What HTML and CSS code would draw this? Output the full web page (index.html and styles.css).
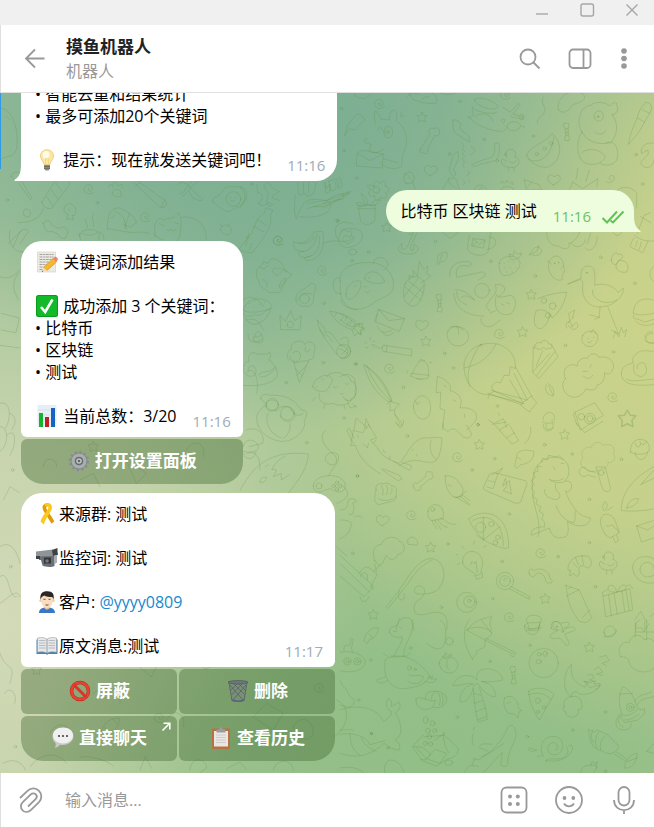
FILE: index.html
```html
<!DOCTYPE html>
<html lang="zh-CN">
<head>
<meta charset="utf-8">
<meta name="viewport" content="width=device-width, initial-scale=1">
<title>摸鱼机器人</title>
<link rel="stylesheet" href="styles.css">
</head>
<body>
<div class="app">
  <div class="titlebar">
    <button class="win-btn" aria-label="最小化"><svg width="16" height="16" viewBox="0 0 16 16"><path d="M2 12h12"/></svg></button>
    <button class="win-btn" aria-label="最大化"><svg width="16" height="16" viewBox="0 0 16 16"><rect x="2" y="2" width="12.500" height="12" rx="2"/></svg></button>
    <button class="win-btn" aria-label="关闭"><svg width="16" height="16" viewBox="0 0 16 16"><path d="M2.500 2.500l11 11M13.500 2.500l-11 11"/></svg></button>
  </div>

  <header class="header">
    <button class="icon-btn back" aria-label="返回"><svg width="24" height="24" viewBox="0 0 24 24"><path d="M22.500 11.500H4M13 2.500l-9 9 9 9"/></svg></button>
    <div class="peer">
      <h1 class="peer-name">摸鱼机器人</h1>
      <p class="peer-status">机器人</p>
    </div>
    <button class="icon-btn" aria-label="搜索"><svg width="24" height="24" viewBox="0 0 24 24"><circle cx="10" cy="10" r="7.500"/><path d="M15.500 15.500l6 6"/></svg></button>
    <button class="icon-btn" aria-label="侧栏"><svg width="24" height="24" viewBox="0 0 24 24"><rect x="1.500" y="2.500" width="21" height="18.500" rx="3.500"/><path d="M15.500 2.500V21"/></svg></button>
    <button class="icon-btn more" aria-label="更多"><svg width="24" height="24" viewBox="0 0 24 24"><g class="solid"><circle cx="12" cy="4" r="2.800"/><circle cx="12" cy="11.500" r="2.800"/><circle cx="12" cy="19" r="2.800"/></g></svg></button>
  </header>

  <main class="chat">
    <svg class="wallpaper" viewBox="0 279 1962 2040" preserveAspectRatio="xMidYMid slice" aria-hidden="true">
      <defs>
        <path id="star" d="M0-15l5 9 10 1-7 8 2 11-10-5-10 5 1-11-7-8 11-1z"/>
        <path id="heart" d="M-2 17C-12 12-22 4-18-7c4-9 14-9 19 0C8-16 19-12 19-3 18 8 6 12-2 17z"/>
        <path id="spiral" d="M1 1c-4-3-7 2-4 6 4 5 13 1 12-7C8-11-8-13-14-3c-6 11 2 21 14 20 6 0 10-2 13-5"/>
        <circle id="dot" r="4"/>
        <path id="candy" d="M-7-26l12-1 2 10-3 6 1 22 4 7-2 8-14-1 2-9 3-5-3-22-4-7zM-5-8l11-4M-5 3l10-4M-5 12l10-4"/>
        <path id="bone" d="M-18 8l26-22c-3-9 3-16 9-12 5-3 12 1 9 8 6 4 4 12-4 13l-4 1-26 22c2 7-3 13-9 10-5 4-12-1-10-7-7-3-5-12 2-14z"/>
        <path id="fish" d="M-28 25l4-15C-20-8 0-28 28-26c2 22-16 44-38 43l-10 11zM-17 2l10 10M10-22l12 13"/>
        <path id="chick" d="M-14-8c-10-18 10-34 24-18 5 6 3 12 0 16 18 2 18 30-4 32h-14c-22-2-26-20-18-26l12 8M-8 24v10M8 24v10M-14-20l-8 3 8 4M-6 5c8 8 18 4 20-4"/>
        <path id="cloud" d="M-60 62c-22-10-20-34-6-44-20-28 10-54 34-46 10-28 42-28 50-8 30-16 62 8 44 36 18 14 0 42-22 36 2 22-16 30-30 26-14 16-52 18-70 0z"/>
      </defs>

      <g class="doodles">
        <g transform="translate(972 0)">
          <path d="M86 275l10 14q16 12 34 2l14-14M248 290q20-18 30-6l20-14M254 278l12 20q30 14 70 12c6-14-2-28-16-32M294 300q10-16 22-8M350 280q20 8 44 0"/>
          <path d="M62 406l10-34 28-30c8-2 20 10 22 18l-30 30-14-4z"/>
          <path d="M154 372c-4-22-4-38 2-40l16 26 24 2c0-22 8-34 16-28 8 8 8 22 4 30 30 20 40 58 24 92-6 14-8 30-6 44-20 14-52 8-66-10M130 418c-10-6-14 6-6 10l18 6c-8 14-6 22 2 24 14 2 26-4 36-12M180 394c2-22 28-20 26 4-2 22-28 22-26-4zM162 390q8-18 12 0M100 460l14-10 64 12-4 42-76-6zM100 460l38 22 40-20M178 476l42 12M232 338l-2 12M238 346l-4 6"/>
          <circle cx="190" cy="396" r="5"/>
          <path d="M290 448l28-46c-8-12 2-22 12-16 8-6 20 0 16 10 4 10-8 14-14 10l-22 42c6 14-6 16-12 10-14 0-14-12-8-10z"/>
          <path d="M388 360c-4 20 0 34 10 42s24 14 38 24c4-16-6-24-20-32-10-8-10-14-4-22q-14-16-24-12zM414 430l6 8-6 8 8 8-8 8 8 8-8 8 8 8-6 8 4 8M386 468l16-14c6 20-6 40-14 54l8 16-8 6c-14-12-14-26-6-42z"/>
          <path d="M440 440c8 0 18 8 10 18-6 8-10 8-12 4M444 494c22-12 40-16 54-20 14-6 16-22 14-44l12-2c6 26 0 44-10 54-18 6-42 8-64 18z"/>
          <path d="M452 300c4-16 66 4 70 20-8 16-64 2-70-20zM444 318c-4 14 60 30 76 18M444 324l4 20c-8 10-16 12-14 6 16 20 58 44 100 44M452 350c20-16 44-10 56 14M536 322l22 14 26-26 4 6-22 26 32 8c4 8-2 10-8 6l-30-6"/>
          <path d="M548 380c0-16 34-22 42-4-4 20-36 22-42 4zM540 372l-8-10c4-12 14-4 10 4M590 358c-8-6 0-20 8-12l-4 14M546 386l-6 8M592 378l10 4"/>
          <path d="M660 290c-16 16 8 30 2 44-4 16-24 18-22 36M704 330c-10-20 14-54 46-56 16-2 34 10 32 20-6 16-30 14-40 24-8 16-26 26-38 12z"/>
          <path d="M608 466c8-30 56-34 76-66 34 26 32 86-16 102-26 2-52-16-60-36zM614 478c24 14 66 2 76-68"/>
          <circle cx="638" cy="462" r="5"/><circle cx="662" cy="446" r="5"/><circle cx="682" cy="430" r="5"/>
          <path d="M774 396c-20-28-6-78 26-80 14-14 44-10 58 2 8-12 24-14 20-2 8 10 0 28-14 28 20 24 18 60-4 84-28 6-66 4-86-32zM774 396c-14 16-16 52-8 74 10 28 50 26 62 18 10 14 48 8 52-14 6-30-10-56-34-46M810 350c0-22 28-24 28 0-2 18-26 18-28 0M774 458c24-20 60-6 70 12-4 10-14 18-16 18M846 392c-8 12-22 14-34 4"/>
          <circle cx="822" cy="350" r="3"/>
          <path d="M914 432c2-22 12-50 26-78l22 12c-14 28-32 50-48 66zM940 354c2-18 10-28 24-46 14-2 20 6 18 22l-20 36M956 330l22 10M990 430c-20-6-42 8-38 30l20-10c6 20-16 22-22 40 14 24 40 10 40-10"/>
          <path d="M150 560c-6-16 12-24 18-8 6-18 24-6 14 8 16-4 18 16 2 18 12 10-4 26-14 12-4 18-22 12-18-4-14 10-26-8-10-18-18-4-14-22 8-8z"/><circle cx="157" cy="570" r="10"/>
          <path d="M104 616h50l-2 46c-8 14-36 16-42 2zM102 626h52M126 614q-22-10-30-4 12 16 30 6M132 614c0-14-12-30-20-34 2 16 6 26 20 34zM138 616q12-20 32-16-10 18-32 16"/>
          <path d="M246 550c-20-22 12-50 24-22 6 12-8 28-24 22zM264 542l10 26M238 524q12-10 20 12M0 548l6 20c-8 14 12 14 12 0l-4-24 24-8 6 18c-8 14 10 16 10-2l-8-22M0 610c20-20 44-30 60-28l-6 16c-14 0-30 14-38 18l-16 8M50 584l14-6 16-4-14 14-12 10M354 572l20-36c6-4 16-2 22 2l10 30M374 536q0 20 24 30"/>
          <path d="M430 512l6 6-6 10M418 540l6 6-6 8M434 540l4 8M452 570c4-20 28-20 36-2M464 570q4-10 12-6M600 540l8 30h46l-10-16zM608 562l14-14M530 570c6-14 36-14 40 0M532 550c-4-6 8-10 8 0M546 548c-2-8 8-8 8 0M560 552c0-10 10-6 6 2M736 570l10-24 30 20 46-30-4 24M762 504l-6 34M786 544l10-34M860 540c-10-4-2-18 8-12 10 10-4 24-20 18M880 570c20-16 50-6 58 10v44M940 700l20-54 20-8M950 650l30 18"/>
          <path d="M0 730c30-20 70 10 90-20M40 716c-20-40 10-60 48-44M50 700c0-14 14-16 20-4 12-10 20 4 6 16"/>
          <use href="#star" x="294" y="352"/><use href="#star" x="188" y="682"/><use href="#heart" x="320" y="510"/><use href="#heart" x="690" y="538"/><use href="#spiral" x="168" y="308"/><use href="#spiral" x="546" y="280"/><use href="#candy" x="728" y="396"/><use href="#chick" transform="translate(562 480)"/>
          <use href="#dot" x="52" y="326"/><use href="#dot" x="408" y="304"/><use href="#dot" x="480" y="418"/><use href="#dot" x="628" y="408"/><use href="#dot" x="60" y="452"/><use href="#dot" x="376" y="462"/><use href="#dot" x="520" y="482"/><use href="#dot" x="936" y="464"/><use href="#dot" x="98" y="534"/><use href="#dot" x="40" y="662"/><use href="#dot" x="956" y="552"/>
        </g>

        <g transform="translate(1020 690)">
          <path d="M206 14l14-4-14 30c-4 14-14 22-22 16l2-16-12 12c0 16 18 22 36 20 14 2 28-10 24-22l-12-8-2 18c-10 4-10-4-6-16l16-34M388 14l-6 44c10 20 50 24 62 8l8-58M448 22c26-6 28 34-6 36M400 26l36 4-6 24-34-6zM400 26l18 18 18-14M396 48l14-12M310 8l20 18 26-20M620 8c0 30 20 42 36 40 14 14 40 8 30-8 18-4 30-20 34-40M694 40c10 16 36 14 42-10M752 10l-10 30M736 54c18 20 36-10 36-34M820 8q14 18 24 0M884 16c14 14 40 20 60 16M882 24c-14 18-12 30-4 30l30 14 16-34M892 32l-6 18M904 36l-6 22"/>
          <path d="M292 102c-4-30 10-34 28-36 6 22-8 30-18 30M306 74l-10 30M568 74c14-26 26-30 38-12-4 16-22 18-30 12M596 46l-4 16-24 14"/>
          <path d="M478 100c0-26 60-30 62 0 0 20-26 40-50 36-10-6-14-20-12-36zM512 86l-4-14 12 4 2-14 10 10 14-2-10 14-14 6z"/>
          <path d="M492 100h1M506 94h1M522 98h1M494 114h1M510 112h1M526 114h1M500 126h1M516 126h1" />
          <path d="M650 78c-26 0-30 34-20 50 10 22 28 26 38 20-8-10 10-24 4-34-2-22-10-36-22-36M622 92l12 10M670 108l-8 8"/>
          <circle cx="644" cy="100" r="1"/><circle cx="656" cy="98" r="1"/>
          <path d="M814 90c0-18 18-28 20-16 14-6 20 10 6 14l-10 14c-10 4-16-4-16-12zM830 100c-12 22 18 30 30 26 14-24-10-40-24-34z"/>
          <path d="M100 100c4-30 46-18 44 6-4 10-10 10-14 14M0 154c-8-40 44-58 80-56 46-6 86 32 80 74-4 26-36 30-56 44-30 28-86 34-104-8"/>
          <path d="M18 192c0-26 26-46 44-38 6 14-12 50-32 54-10 0-12-8-12-16zM74 146c0-30 50-28 60 10-12 10-58 2-60-10zM76 184q6 10 14-2M44 168h4M86 144h4M72 170h8"/>
          <path d="M196 160c10-26 46-26 56-4 4 30-10 66-30 72-26 4-40-34-26-68zM210 150l-4-14 14 4 0-18 12 16 6-44 12 24 14-10-4 24 12 6-16 14-14 6M194 170l50 42M204 152l46 36M192 200l42-54M206 222l46-56"/>
          <path d="M330 140c-6-34 24-50 60-44 6 4 4 12-4 12-34-6-40 10-36 34l28-6 40-8c10-6 20 2 18 8l-20 14M342 190c2 40 30 68 90 68M344 180c14-6 46 10 58 30M350 184c0 24 14 36 30 40M404 210c-20-14-30-16-40-8"/>
          <circle cx="426" cy="182" r="22"/>
          <path d="M470 196l10 6 32-6 8 4c10 14 8 40-8 52-30 8-48-10-46-40zM452 206c10-10 22-18 14-42 18-4 30 4 28 18l-18 20M452 206l-14 22 14 20 16-6M424 264c-6 14 10 28 24 26 20-4 20-14 34-20M484 222l8 4M500 218l8 4"/>
          <path d="M594 206c20-10 58-18 86-20-4 28-20 60-44 78-10-20-26-30-48-22M588 244c-12 30-2 54 14 52 16-6 24-24 26-42"/>
          <circle cx="638" cy="228" r="10"/><circle cx="612" cy="212" r="8"/><circle cx="624" cy="256" r="8"/>
          <path d="M684 162l40-18c-4-20 4-36 20-36 20 0 22 16 20 58 24-10 60 2 70 22l16-14c4 20-26 54-62 56-36 6-64-20-60-62 2-12-2-16-6-20l-38 14M758 180c-6 28 40 50 72 30M780 230l-2 32-30-8M778 262l-14 6M804 232l32 80-22-12M820 324l6-20 10 16 8-28 6 16 10-10-6 22"/>
          <circle cx="740" cy="128" r="2"/>
          <path d="M880 250c0-56 60-46 70-34M880 250c10 8 60 6 70-6M880 256c-2 10 6 12 10 10l24 10 36-10M886 272c14 20 50 16 60 6M940 110c-20 20-6 40 0 44M938 310c-30 0-26 36 4 30"/>
          <path d="M116 238l78 28-16 38-70-28zM116 238l30 34 48-6M108 276l-6-6 10-18M112 288c4 16 20 22 30 18l14-6M126 306c10 16 24 12 34 2"/>
          <path d="M0 250c20 6 46 20 56 34-10 12-30 8-56-16M56 284l12-4-2 12 8 6-10 4-2 12-14-14-8-6M20 260l-4 12M36 270l-6 14"/>
          <path d="M324 302c14-22 60-14 62 18-2 30-46 38-60 12-6-14-6-22-2-30zM330 292c14-8 30 0 40 8M350 288q10 14 6 24"/>
          <path d="M680 294c-10-26 18-22 16-2 10-20 22-16 16 0-8 10-20 8-26-6M690 276l-4-26 18-10-6 22M700 262l-16 16M728 316c6-14 28-14 34-10 20 6 12 40-10 44-20 0-32-14-24-34zM744 326h2M760 322h2M744 338q8 2 12-6M752 308l8-10 10 14M916 324c-6-10 10-22 22-18M914 330c10 10 20 10 30 6"/>
          <path d="M132 346l84 12-2 20-84-14c-6-8-4-16 2-18zM142 346l-4 20M128 352c-18 10-16-10-34-8M90 330l2-8M80 340l-6-4M84 352l-8 2M98 336l6-4M100 350l4 4"/>
          <path d="M212 438c10-10 12-34 32-46 20 2 22 20 22 50-14 10-42 4-54-4zM212 430l54 6M236 394l6-6 12 4M230 446c8 4 16 2 18 0M200 430l4-8M268 396l8 2"/>
          <path d="M72 404c26 18 60 40 84 108l-10 4c-44-30-64-70-74-112zM82 410c16 44 40 76 72 104M78 406c40 34 60 70 76 106M142 522l6-8 30 8-14 16v14c14 20 30 30 20 40-10 2-10-8-14-12M150 520l0 22 12-2M164 552l16 30"/>
          <path d="M220 530c4-42 50-46 52 4 0 44-46 46-52-4zM226 512l6 12 8-8M0 440c20-14 34 8 34 16 16-4 16 20 10 26 10 20-14 38-30 26l-4-8M20 508l10 26 20-6M0 330c16-16 30-10 24 16 20 20-6 48-24 36M0 346c20 0 34 20 14 36"/>
          <path d="M292 440c16 0 30 16 40 28l-2 14c20 4 30 16 34 32l-4 20c30-4 50 10 50 26 0 16-20 30-30 40M292 440l-4 48 14-2-2 50 14 4-6 60M312 466l6 4M340 510l8 4M374 552v10"/>
          <path d="M372 404c6-50 50-66 88-64 40 4 66 34 66 66v10l-16-6-2 26-16 0-10 22-14-2-14 12 8 16-16 10-2 12M372 404c-2 50 30 90 72 90M372 414c30-6 70-20 96-72M390 470c-14-30-2-80 32-128M426 350c-10-10-2-6 0-6M526 410l50 90M522 430l40 80M510 450l40 70M444 490l100 34M454 480l98 42M464 484l96 26M448 494l96 24M560 510l14-12 16 20-22 28-26-20 10-12z"/>
          <path d="M580 352l-2 74 18 20 58-66-20-38M578 426l52-56M590 436l54-70M588 410l20-48M584 350c0-14 16-14 18-10 6-14 24-8 24 2 16 0 10 20 0 12-6 6-14 0-16-2-8 8-18 8-20 2-8 2-12 0-6-4z"/>
          <path d="M676 446c-14-32 14-50 36-38-2-20 24-28 30-22 4-20 30-18 34-4 34-8 52 20 42 36-6 20-20 14-24 10 0 30-14 36-22 36-2 22-30 16-34 12-10 24-40 36-60 14-12-14-14-30-2-44zM728 424h14M750 412l4-8M730 438c10 10 22 10 28-2"/>
          <path d="M618 464c-6 26 10 32 22 34 4-20-2-28-16-38M626 466l12 28M844 430c0-20 20-30 36-30-8-20 10-30 20-36 10-4 30 0 40 0M844 430c0 30 30 40 98 34M882 404c-4 20 0 30 20 36 20-4 20-20 14-34 0-14-30-10-24 10M860 448c20 10 50 0 80 0"/>
          <path d="M706 546l58-28 26 38-68 44zM706 546l-6 6 12 36"/><circle cx="750" cy="566" r="16"/><circle cx="724" cy="560" r="10"/><circle cx="750" cy="566" r="9"/>
          <path d="M610 570c-4-16 16-28 28-20 10 10 6 24-4 22M608 576c10 6 24 4 36 0M618 582v14q8 6 20-2M456 584l34-18 10 26M446 570l10 8M474 548l4 8M42 600l6-36 34 30M74 596l4-30 12 26"/>
          <use href="#heart" x="246" y="284"/><use href="#spiral" x="480" y="308"/><use href="#spiral" x="150" y="412"/><use href="#spiral" x="820" y="498"/><use href="#star" x="574" y="194"/><use href="#star" x="548" y="306"/><use href="#star" x="258" y="334"/><use href="#star" transform="translate(862 566) scale(1.700)"/><use href="#candy" x="298" y="220"/>
          <use href="#dot" x="286" y="34"/><use href="#dot" x="86" y="66"/><use href="#dot" x="36" y="92"/><use href="#dot" x="452" y="94"/><use href="#dot" x="586" y="138"/><use href="#dot" x="782" y="82"/><use href="#dot" x="884" y="160"/><use href="#dot" x="314" y="370"/><use href="#dot" x="676" y="346"/><use href="#dot" x="820" y="366"/><use href="#dot" x="340" y="414"/><use href="#dot" x="190" y="472"/><use href="#dot" x="472" y="528"/><use href="#dot" x="46" y="402"/><use href="#dot" x="414" y="584"/>
        </g>

        <g transform="translate(1020 1260)">
          <path d="M32 76l8-44 28 6 18-24 24 40-20 6 20 20c14 30 40 40 66 50 20-10 30-60 70-76 34 0 40-4 60 0-2 30-6 62-24 72-40 6-50-20-104 10M32 76l14 0c10 30 30 60 76 86M40 70l-20-40 8-6 14 30M124 148l50 34 12-4-8-12-50-20M160 124l46 26c10-4 10-8 6-14l-24-8M274 60c-10 20 0 50 16 60M70 72l12 12 4-14M52 44l4 8M130 90l4 8M150 108l-2 10M108 60l-8 10M218 88v4M230 104v4"/>
          <path d="M308 10c-2 14 6 20 16 24 14-14 24-4 24-4l22 20c14 10 26 0 24-10l-14-24M456 6l60 66 20-10-26-44M466 12l34-6M478 30l30-18M500 54l24-16M572 22q4 30-18 48M610 14c0 14 6 20 16 18 14-2 16-12 12-22M708 8l26 30 54-34M166 4c10 20 30 14 24-4"/>
          <path d="M108 210c-4-18 12-22 22-18 8-6 20 0 22 4 16 2 20 10 16 28 4 14-6 18-12 20l-40 10c-14-4-14-20-8-44zM116 236c14 10 40 6 54-8M124 196q10 16 4 30M140 196q8 12 0 28M156 204q4 10-6 20"/>
          <path d="M316 168c20-4 42 10 54 42l-6 20-20 2c-20-12-30-34-28-64zM342 230c4 8 20-2 26-8l12-10M360 228l30 26M366 224l24 18M350 232l36 22M324 194l10 4"/>
          <path d="M470 160l86 22c6 6 6 12 2 18l-16 46c-8 6-14 4-20 2l-84-36c-10-4-8-8-6-14l16-34c8-6 14-6 22-4zM474 160l-14 44M456 164l32-20-12 16M440 200l18 6M446 182l18 4M496 176l-8 22 20-16 6 40-24-10 10-14z"/>
          <path d="M524 138l8-38c16-14 30-10 50-6 0 22-14 38-40 40l-10 10zM532 112l10 6"/>
          <path d="M594 350c16-60-34-110-12-190 6-30 34-50 64-48 30 2 44 20 40 50-2 10-6 14-12 22 14-4 24 4 20 20-6 16-14 12-18 8 10 30 24 50 36 64 14 12 26 16 40 18-4 22-24 28-50 20l-20-8c4 20 4 34-4 44-30 10-42 0-50-26l-54 22c-4-20 16-24 34-26M604 140l-12-2 2 16-14 4 6 14-12 8 8 14-8 10 10 12-6 14 14 8-4 14 14 8-4 14 12 8-4 16 8 10-2 16M604 128l4-14 14 6 4-14 18 4 14-2 12 10M672 186c-16 4-34 2-44-8 14 6 30 6 42-2M646 192c0 16 2 22 12 28 8 16-10 24-26 14-16-4-22-20-18-26M648 256c10 30 30 50 54 52 6-14 2-24 4-34M664 130h8M640 140l6 10"/>
          <use href="#cloud" transform="translate(776 102) scale(.700)"/>
          <path d="M768 142l20 66c8 10 22 8 24-2l-16-64zM766 158c-10-6-14-2-22-6-6-14-22-14-26 0s14 24 26 12c8 6 14 4 22 8"/><circle cx="784" cy="158" r="8"/>
          <path d="M872 96c-6-50 60-50 56-6-4 14-40 18-56 6zM886 98c0 28 34 28 36-2M886 70c0 14 14 14 16 2M900 64c0 12 16 12 20 0M942 140c-60 30-100 80-98 132 30 2 70 2 98-6M942 150l-40 44 40-20M860 264c6-24 24-30 36-28-4 18-20 26-36 28z"/>
          <path d="M792 272c-8-14-2-20 4-28 8 8 6 20 0 28M804 270l14-10M782 314c-8-40 34-40 44-10l12 34-28 16-14-10zM798 316c10 10 14-6 22 0 4 14 14 8 16 20M818 350l8 18 10-6-6-16M890 318l50-16M890 318l14 48 38-12M890 318l34 12 18-12"/>
          <path d="M388 296c30-30 120-30 118 86l-10 4c-60-14-90-40-110-90zM398 302c40-24 92-6 92 76M430 292v68l50-40M430 360l-20-14"/><circle cx="422" cy="322" r="15"/><circle cx="454" cy="312" r="8"/><circle cx="474" cy="352" r="7"/><circle cx="466" cy="368" r="7"/>
          <path d="M264 274c0-24 36-28 44-4 6 14 2 18 0 26l-32 6c-12-4-12-16-12-28zM276 300c0 14 12 14 14 26M284 300c4 14 14 14 18 28M292 298c10 14 14 20 30 24M300 294c20 4 24 24 48 18M0 270c20 0 24-10 24-30 14-8 24 0 26 4l-12 6c6 14 6 20-2 34l-10-2M44 290q20-6 22 4M0 300c20 0 30 4 34 10-2 30-20 40-34 46"/>
          <circle cx="278" cy="268" r="6"/>
          <path d="M104 422c-10-30 0-50 20-48 10-30 50-26 54-10 24 8 16 40-4 38-6 22-30 20-34 4-10 10-8 30-24 30l-12-14zM204 372c-6-14 6-22 16-20 10 4 16 14 12 22zM104 432l6 22M120 436l-20 18M58 460c14-24 24-20 34-14l20 16-20 40M62 470c0-10 14-18 20-6v16M0 406l102 94-30 30-72-62M0 430l88 86M100 508l-8-10M60 530c4 20 20 20 28 0"/>
          <path d="M138 562l50-66c30-50 60-84 90-80 34 6 44 54 22 84-10 20-40 24-70 22-14-12-4-26 12-24 16 6 16 24-2 40-14 4-26 30-10 44 30 10 50-16 80 0 14 14 12 30 10 48M144 566l56-70c20-30 40-60 76-76M178 512l-4 18c10 20 24 6 18-8"/>
          <path d="M368 428c-4-46 60-46 60 4-2 14-6 14-4 28l-16 8c-6-18-36-16-40-40zM392 434l4-10 8 8 4-8 4 34M404 466l6 12 18-6-2-14M400 372l4-10M372 386l-6-8M354 404h-6M360 430l-8 4M430 382l10-6"/>
          <circle cx="495" cy="483" r="26"/><circle cx="495" cy="483" r="16"/><path d="M494 483c-8-4-2-10 6-6M514 500l56 30-2 8-60-32"/>
          <path d="M568 462c-6-16 8-20 12-10 24-14 50 4 50 24 10 4 8 16-2 12-8 4-12-4-12-14-8-16-22-20-32-8-2 8-12 6-16-4zM684 450c-4-30 30-50 60-40 16 10 12 32-2 34-20-14-30-4-24 12 0 16-14 16-16 4l-14 8 4-16zM706 412l10 24M726 406l4 28M698 428l14 14"/>
          <path d="M878 444c0-40 50-40 64-26M878 444c4 40 40 50 64 44M900 450c0-30 40-30 42-6M900 450c4 24 24 24 42 16"/>
          <circle cx="380" cy="547" r="30"/><circle cx="388" cy="545" r="17"/><circle cx="388" cy="542" r="5"/>
          <path d="M678 496l40 14 38 84-18 14-20-4c-30-40-34-60-40-108zM680 528l36-18M686 506l8-4M728 592l22-22"/>
          <path d="M790 528l80-22 8 64-80 20zM806 524l8 64M822 520l10 62M846 514l8 60M858 510l10 62M830 516c-4-24-26-26-26-10 2 12 16 10 26 10zM834 514c4-22 26-24 24-10-2 10-14 10-24 10zM790 528l-4-10 18-10M878 506l-8-12-12 4"/>
          <path d="M560 604c-4-14 10-18 20-18 20 0 30 10 20 22l-6 24h-26l-4-20zM560 630l44-6M650 630c-26-20-4-34 10-20l24-4c10 8 0 16-10 16M382 630c20-30 50-36 74-40-10 20-6 30 0 40M168 630c0-40 44-50 52-20v20M884 600l18-26 16 30M888 608v22M914 606v22M930 590l12-10"/>
          <use href="#star" x="418" y="74"/><use href="#star" x="674" y="44"/><use href="#star" x="272" y="382"/><use href="#star" x="616" y="536"/><use href="#star" x="100" y="584"/><use href="#heart" x="128" y="300"/><use href="#spiral" x="354" y="108"/><use href="#spiral" x="216" y="282"/><use href="#spiral" x="604" y="396"/><use href="#spiral" x="510" y="588"/><use href="#bone" x="250" y="182"/><use href="#chick" x="808" y="428"/>
          <use href="#dot" x="202" y="48"/><use href="#dot" x="414" y="14"/><use href="#dot" x="464" y="116"/><use href="#dot" x="396" y="150"/><use href="#dot" x="614" y="74"/><use href="#dot" x="696" y="102"/><use href="#dot" x="844" y="118"/><use href="#dot" x="748" y="238"/><use href="#dot" x="508" y="282"/><use href="#dot" x="52" y="168"/><use href="#dot" x="324" y="372"/><use href="#dot" x="486" y="424"/><use href="#dot" x="654" y="410"/><use href="#dot" x="748" y="368"/><use href="#dot" x="458" y="536"/><use href="#dot" x="304" y="562"/><use href="#dot" x="766" y="500"/><use href="#dot" x="38" y="400"/>
        </g>

        <g transform="translate(1020 1860)">
          <path d="M148 36c-4-20 20-14 26-22l4-20M148 36c10 20 30 18 38 14 4 20-20 40-24 60M216 0c10 50-30 70-24 108M152 108h42M136 120c6-10 20-10 60-10 50 20 60 40 74 60M136 120c-10 50 14 84 50 86 44-2 74-14 84-38M136 170c-20 10-24 6-28 12 10 10 24 8 34 0M264 172c14 10 10-10 14-4l-4 10 16-2c-6 14-18 14-36 8M206 164c10 10 24-4 44 6-4 26-36 24-46 14M130 100l14 10M210 98l-12 12M160 34h10M176 20l8 4"/>
          <circle cx="208" cy="144" r="6"/><circle cx="226" cy="148" r="3"/>
          <path d="M300 0c20 10 20 40 14 70-10 24-30 20-54 0"/><circle cx="328" cy="64" r="11"/>
          <path d="M398 118c-34-50-30-100-8-120M398 118c4-16 14-12 12-24 14-14 30-4 24-30 14-20 24-14 20-26l-30-38M380 30c20-14 60-10 76 8M380 30l54 30M436 54l90 44c-2 16-10 14-16 6M434 60l84 42M0 96c50-6 76 16 76 30-4 30-50 34-76 26M12 92c-4-16 10-20 14-14l8-14c-8-8 2-14 6-4l-6 24 4 12"/>
          <circle cx="22" cy="124" r="11"/><circle cx="52" cy="124" r="11"/><circle cx="22" cy="124" r="5"/><circle cx="52" cy="124" r="5"/>
          <path d="M72 62l4-16c14-20 26-24 40-22-4 22-16 34-28 34l-6 12zM86 40l12 14"/>
          <path d="M298 130c0-28 54-26 56 4 0 30-50 38-56-4zM322 122q-6 20 4 26M318 116l-12-6 10-4 0-8 8 8 12-2-8 10z"/>
          <path d="M410 178c-20-20-60-14-72 18 20 4 44-10 62-4-20 4-40 20-40 54 20 0 34-14 40-44 4-8 8-14 14-10 14 20 34 40 52 38 2-20-10-40-42-46 20 4 50 0 64-4 0-20-30-40-60-32-14 4-18 14-18 30zM400 206c2 30 4 60 14 100l28-8c-2-30-14-60-24-96M402 220l20 6M402 250l26-8M406 276l30-12M412 300l26-10"/>
          <path d="M228 240c0-14 20-4 30-2s20 8 28 2c-2 24-20 30-34 28-14 0-24-14-24-28zM256 236c0-20 10-22 30-22s34 10 34 24c-4 24-24 28-42 24M284 214q-10 10-10 24M292 216q14 14 6 40M306 222q8 16 0 34"/>
          <path d="M0 270c60-20 110-6 130 34 20-10 26-24 24-30-20-10-16-24-10-38 8 0 12 8 10 24l24-14c6 14 0 24-12 32 24 40 20 70 0 82 16 10 14 20 12 30-20 0-30-10-46-20-50 44-90 44-132 30M0 344c30-10 80 4 90 30l44-12M30 342c0 30 10 50 30 64M64 354c4 14 20 30 44 40M0 330c20 0 30-4 40 2M0 180c10 30 20 20 24 40 10 20 24 10 16 34-10 10-24 10-40 0"/>
          <circle class="pip" cx="94" cy="341" r="4"/>
          <path d="M218 380l30-34 6 4 60-4 40 38c4 16-10 26-20 30l-14 4-30 20-40-14zM228 382l32 34-20 4M218 380l30 2 24 20-18 20M272 402l14-14 34 12-20 30-36-12zM312 338q-6 30 14 60M314 340l-30 20"/>
          <circle cx="278" cy="310" r="7"/><circle cx="264" cy="332" r="7"/><circle cx="284" cy="332" r="6"/><ellipse cx="257" cy="300" rx="7" ry="10"/><circle cx="268" cy="350" r="7"/><circle cx="256" cy="370" r="6"/><circle cx="272" cy="372" r="6"/><ellipse cx="326" cy="428" rx="12" ry="8"/>
          <path d="M374 458c4-14 14-20 24-24 0-14 14-20 16-14 40-20 70-54 88-94 10-20 26-10 26 20-4 24-30 60-24 84-4 14-14 10-22 4 0-10 6-20 4-36l-56 60M400 420c0-6 6-10 6-2M424 410c30-10 50-30 68-40M396 438q10-4 20 2M418 380c8-16 30-4 40-8M420 384l24 10M402 340c-10 10-4 24-2 36M404 320l-4 10M134 458c-4-40 20-40 30-36 20 10 24 26 28 36M0 444c30-4 50-4 70 14"/>
          <path d="M494 234c20-14 40 4 42 32l10 6-8 2-4 20-12-12-16-2c-14-14-18-30-12-46zM500 250l12-4"/>
          <path d="M566 214c14-14 56-14 76 10l-44 76c-14-20-30-50-32-86zM566 224c30-10 50-4 68 16"/><circle cx="594" cy="242" r="8"/><circle cx="594" cy="276" r="5"/><circle cx="612" cy="262" r="5"/><circle cx="611" cy="129" r="44"/><ellipse cx="596" cy="125" rx="8" ry="6"/><ellipse cx="598" cy="103" rx="6" ry="5"/><ellipse cx="616" cy="101" rx="6" ry="8"/>
          <path d="M554 16c10-14 30-4 46-10-2 30-12 40-24 38-14-4-26-16-22-28zM554 20c16 10 40 8 46-4M634 24c-6-30 34-24 32 4l34-8c10 8 4 14-4 14l-22 8 14 28c-4 10-12 8-14 0l-14-16-20 2c-14 0-12-14 2-18l14-8c-14 0-20 0-22-6z"/>
          <circle cx="668" cy="34" r="3"/><circle cx="650" cy="20" r="2"/>
          <path d="M792 38c-4-20 30-30 34-6 4 20-30 28-34 6zM796 44c-20 20 44-4 34-14M842 110c-14-24 4-50 26-42 4-30 40-26 44-8 10-6 20-6 30 4M842 110c14 0 20 4 24 10 0 30 50 50 76 24M886 50V10l14-10M886 36h56M892 24h14l6 12 16-26M920 0v60"/>
          <path d="M694 134c-30 24-24 90 0 96 0-20 20-16 24-8 20 6 60-10 62-26-14 0-20 4-28 8l-20-20 12 2-10 16c-20-10-44-20-40-68zM732 184l18 4 16-6-4 10 18-2c4 10-10 14-14 18M672 260c-4-20 10-30 24-30 20-4 30 10 28 20 6 10 0 20-10 18 4 14-6 24-16 24-20-2-20-10-20-16-8 0-10-10-6-16z"/>
          <path d="M742 166l14-4 6 12-14 6 14 4M762 150l14-10 12 16-18 6 18 4M778 112l20-6 10 16-22 8 14 8"/>
          <path d="M846 280c-14-30-8-60 2-80 20 6 34 30 42 58l10 12 14-4v14l-20 20-40 8-10-14zM838 222l40-2M848 286c20 0 30-2 44-18M854 300q20 2 44-18M842 280c-20 16-20 50 8 50 20 0 24-10 24-20M842 286c-10 10-10 30 8 34M884 246c10-24 30-20 50-30M892 254c10-20 30-18 50-24"/><circle cx="871" cy="262" r="12"/><circle cx="871" cy="262" r="5"/>
          <path d="M744 328c8 20 0 54 40 64 20 10 30 14 44 0 14-10 4-20-4-26l-20-22-34-14-6 6zM758 330q-10 24 2 38M776 336q-16 20-6 48M796 346q-20 20-14 44M830 396l30 22M824 402l32 22M856 444c-10-14 20-46 36-44-2 30-20 48-36 44zM862 424l30-10"/>
          <path d="M610 410c-20-40 10-70 44-58 24 14 14 50-6 52-20 6-34-20-16-34 20-10 30 20 12 20M618 424c-4-20 60 10 66-30l-4-14M686 378c10-8 14 0 10 14-14 30-50 34-78 30M564 390q14 8 24 2M566 384l24 6M592 410l14-4"/>
          <path d="M722 458c4-24 20-24 46-22 4 10-4 16-8 22M752 438l4-14 10 8 6-8-2 20M920 394l22-24M920 394l22 6"/>
          <use href="#star" x="748" y="82"/><use href="#candy" x="520" y="166"/>
          <use href="#dot" x="92" y="120"/><use href="#dot" x="212" y="84"/><use href="#dot" x="450" y="124"/><use href="#dot" x="570" y="76"/><use href="#dot" x="56" y="240"/><use href="#dot" x="352" y="292"/><use href="#dot" x="144" y="384"/><use href="#dot" x="562" y="350"/><use href="#dot" x="698" y="330"/><use href="#dot" x="796" y="276"/><use href="#dot" x="796" y="454"/>
        </g>

        <g transform="translate(720 540)">
          <path d="M50 14l4 26c20-4 14 26 0 30 20 20 30-14 44 4-14 10-20 0-16-20 10-20-10-20-10-40M78 8c20 4 14 20 40 26-10 14-24 6-20 20l22 8M80 84l18 6-6 16c4 40-20 60-30 80l-26 32c-20 0-30-6-40-10l40-50c10-30 20-50 36-58zM50 118l30 18M40 140c10 0 20 16 32 14M18 170l10 6M26 160l-8 38M36 190l-8 20M0 20c20 20 20 40 0 64"/>
          <path d="M172 8l6 38 18-6 6 10 20-10 6-32M190 8v30M206 8v30M166 46c-4 30-4 50 2 70 20-40 20-66 80-56 20 0 30 14 20 30-20 20-50 24-90 20M202 70l60-10 68-20-10-2-18 18-100 30M220 80h30l50-24M256 6l2 20 12-14 2 20c14 2 20-6 14-26"/>
          <path d="M162 186c20 10 50-4 60-30l26-2c10 50-10 90-50 88-10-10 0-10 14-14-20 10-40 2-36-10l16-4c-30 0-34-14-30-28zM192 214c20-4 36-20 38-50M212 228c20-10 30-30 26-60M176 190c20 4 40-4 46-20"/>
          <path d="M50 270c0-10 20-10 20-26l14 6 10-14c20 0 34 12 40 36l22 12-14 14c-10 10-14 24-24 40-14-4-30 6-40-8-14-8-24-20-20-24l-8-14zM118 320c0-10 10-24 20-26-2 10-10 24-20 26zM60 262c10 10 20 0 24-6M130 268l12 6M66 300c10-4 20 10 14 22"/>
          <use href="#heart" transform="translate(112 274) scale(.750)"/>
          <path d="M168 360c-4-30 30-30 40-46 10-10 24 0 18 14-10 30 0 44-20 50-20 4-34 0-38-18zM176 360c0-20 20-24 40-18"/><circle cx="194" cy="357" r="14"/>
          <path d="M10 390c10-46 80-40 86-10-4 14-80 24-86 10zM10 398c-2 14 12 10 20 10 10 4 10-10 20-2 20 4 24-20 42-20M16 414c20 40 70 10 76-30"/><path d="M28 370h1M44 364h1M60 372h1M74 366h1M40 382h1"/>
          <path d="M122 448l-2-42 16 18 16-32 12 30 20-14-4 40zM142 436c-4-14 16-18 18-2 0 10-14 14-18 2zM40 480c0-10 10-30 18-24 10 10 14 24 8 30-8 4-20 4-26-6M44 470c8 4 14 0 20-6"/>
          <path d="M146 540c-10-14 0-30 8-32-4-30 40-30 40-14 14-20 40 0 28 24 0 20-10 24-14 20M158 520c10-14 30-4 22 14-8 20-34 10-30-6M160 542l18 66 30-70M162 550c20-6 30-10 44-6M196 500c-4 20 10 20 14 6M166 566l20 20M200 556l-30 30"/>
          <path d="M232 420c14 20 20 14 24 36 20-4 20 10 46 40M232 420c4 40 30 64 60 104M254 458l26 28M240 448l14 20"/><circle cx="311" cy="514" r="21"/><path d="M298 506l14 6 12 10M304 524l20-20"/>
          <path d="M270 394c30 0 56 20 78 40l-10 16c-40-14-60-36-68-56zM340 436l20-6-4 10 16 4-12 6 4 14-12-6-8 10-8-18M290 398l-4 10M310 410l-8 12M328 424l-8 12"/>
          <path d="M10 560c0-10 10-14 18-16-8-20 10-34 20-22l34 0c10-14 14 4 4 18 20 10 28 34 26 46-10 24-50 34-102 30M10 566c-6 24 40 34 38 6-2-20-24-20-24 0M56 586c10-20 30 0 50-26M60 590c20 4 30-10 46-24"/>
          <path d="M218 620c4-20 14-24 26-30 14-10 30-2 34 10l-14 26c-6 14-40 10-46-6zM260 592c0-14 40-20 50-8 24-6 40 14 34 28 10 20 4 40-10 44 0 20-40 24-54 14-30 10-48-10-42-30M226 652l-8 10M256 672l-6 14M312 676l4 12M338 672l12 12M246 598h4M230 618v4M280 620q6 8 12 0M300 640q6 8 12 0M316 610q6 8 10 0"/>
          <path d="M62 656c4-20 20-12 30-10 50-4 78 20 92 44 20 0 20 14 8 32 10 20-20 60-62 62-40 0-80-30-80-70 0-20 20-34 30-40l-18-18zM104 690c10 10 10-10 24-10 20-4 40 10 36 30-4 20-40 20-44-6M78 680c-6-24 36-28 38-4-2 20-36 24-38 4zM84 700c-10 20 0 60 40 74M150 730c4 20-10 40-20 44M190 700c-20 14-30 0-40-14"/><circle cx="142" cy="700" r="20"/><circle cx="97" cy="673" r="18"/>
          <path d="M10 800c0-24 40-30 46 4-8 14-30 14-46 10M12 820c0 20 30 24 36-4M0 932c50-100 120-120 206-110-4 50-40 90-60 116M96 868c10-20 20-30 40-40M96 868l14 2-10 20 24-10v20l24-16M60 906c0-14 10-16 20-14-4 14-10 18-20 14M76 860l10-6M256 752c-24 20 0 50 24 70 24 20 0 50-24 20-4-20 20-30 36-20 14 20-14 40-26 64"/>
          <path d="M220 918c0-40 94-44 96 0 0 24-30 20-40 10-6-4-10 0-20 2-20 12-36 6-36-12z"/><circle cx="237" cy="918" r="9"/><circle cx="281" cy="918" r="5"/><circle cx="301" cy="918" r="5"/><circle cx="291" cy="908" r="5"/><circle cx="291" cy="928" r="5"/>
          <path d="M296 180c0-30 20-36 40-34 30 0 40 20 24 40-20 20-60 26-64-6z"/><ellipse cx="338" cy="216" rx="12" ry="9"/><use href="#heart" transform="translate(325 178) scale(.850)"/>
          <path d="M298 294c-20-4-24 30-10 44l16 4M302 300c-10 60 20 90 50 88"/>
          <use href="#spiral" x="116" y="178"/><use href="#spiral" x="248" y="268"/>
          <use href="#dot" x="292" y="122"/><use href="#dot" x="252" y="370"/><use href="#dot" x="348" y="552"/><use href="#dot" x="250" y="548"/><use href="#dot" x="138" y="608"/><use href="#dot" x="312" y="714"/><use href="#dot" x="200" y="788"/><use href="#dot" x="352" y="888"/>
        </g>

        <g transform="translate(0 510)">
          <path d="M34 20c0-20 30-16 34 0-4 14-26 14-34 0M56 40l36 50 4-6-32-52M126 96l38-62 40-6 6 14-56 74c-20 0-28-10-28-20zM140 80l20 30M154 60l20 28M168 40l18 24M54 158c50 0 70-20 76-44M72 136c-10-24 20-24 20-6-2 14-10 14-20 6"/>
          <path d="M328 52c0-14 10-10 10 0M340 46c-2-14 14-12 12 0M356 48c6-12 14-2 10 6M336 72c4-20 24-20 28 0 4 14-24 10-28 0M192 124c-4-30 30-28 34-8s-4 22-10 20l4 14-10-4-10 2 4-14zM204 118l6 4"/>
          <path d="M400 36l80 76c20 4 24-14 16-20l-84-60M484 110l12-24M406 48l16-12M130 160c10-14 20-10 26 6l20 10c14-10 24-4 28 10l-8 20c-10 0-20-4-22-14l-20-8c-14 4-20-4-24-24zM322 176c0-50 14-64 40-62 24 14 38 20 48 44l-20 14-20-10M322 176l60 10c30 4 30-4 66 4M332 144c8 0 10-6 12-10M388 130l-14 44M344 124c30 10 30 30 36 56M238 200c0-30 60-26 60-6l-2 16M238 190l4 20M246 190c20 10 40 6 48-4M298 186q14 0 14 24M262 172c4-14-10-10-4-24M280 170c6-14-8-14 0-40"/>
          <path d="M466 200c-6-30 0-50 14-56l10 6c20-8 24-4 32-8l14-14c8 20 10 30 4 60 0 20-10 24-14 26M490 210c-14-4-24-10-28-20M544 142c50-8 80 30 74 72M478 160l14 8M524 158l14 4M500 178q6 10 12-2q8 14 16 0M534 44c10-14 30-4 40 14l34 30c0 10-20 0-30-4l-10-20M540 70c10 10 14-20 40-40M546 80c20-10 20-30 50-46"/>
          <path d="M638 96c-4-20 20-14 28-30 10-20 30-20 40-14 30-10 44 24 26 44-10 20-30 14-40 28-20 4-34-14-54-28z"/><circle cx="700" cy="87" r="22"/><path d="M690 84h1M706 82h1M692 92q8 6 14-2"/>
          <path d="M662 178c0-20 30-16 32 0 0 24-30 20-32 0M660 162l6 8M690 160l-6 8M24 222l40-40c10-10 30 0 16 10l-20 30"/>
          <use href="#spiral" x="268" y="54"/><use href="#spiral" x="438" y="138" /><use href="#spiral" x="836" y="208"/>
          <use href="#dot" x="22" y="90"/><use href="#dot" x="292" y="98"/><use href="#dot" x="756" y="42"/>
        </g>

        <g>
          <path d="M0 326c20-10 60 40 50 120-10 30-30 20-46 30M80 284l30 20M20 350l10 10M30 690c-10 50 20 74 56 64M40 740l20-46M0 830c20 10 40 0 60-20M4 940l54 14-10 44-44-8M56 820c-20 20-20 50 0 80M0 1036l60 8M0 1210c40-10 30 60 16 74M20 1306c30-30 30 30 10 60M0 1280c30 0 24 60 0 74M0 1640c30-20 50 10 60 50M10 1500l20-40 28 18M0 1730c30-24 24 70 50 60M0 1810c20-10 50-50 60-20M0 1960c20 60 50 20 30 90M14 2080c14-24 40 0 30 30M1010 1510c30-10 46-30 20-50M1010 1640l30 28"/>
          <path d="M738 1290c20-10 60 0 50 40l-40 10M740 1360c30-10 40 10 40 50M730 900c20-20 50 0 60 20M740 960c30-10 40 10 50 30M744 1000c0 30 20 30 40 20M740 1120c20-30 40 20 30 60M30 1240c20 10 20 30 4 50"/>
          <path d="M240 2274c0-14 80 4 100 24M90 2300c40-50 90-40 110-10M420 2310l16-40 20 36M570 2310c0-40 50-40 50-6l-20 14M820 2310c10-40 60-30 60 0M10 2290c30-20 60 0 66 20M1010 2100c50 20 30 90-8 110M680 2306l40-20 20 24"/>
          <path d="M140 1914l20-30 30 10-8 40zM250 1900c20-40 60-20 60 10M420 2000l20-60 50 20-36 70zM700 1960c10-30 50-30 60 0M820 1900l60-10 10 50-60 10zM280 2080c40-30 80-10 80 30M150 2200c20-40 60-30 70 10M500 2160c20-40 60-20 50 20M760 2150l40-40 50 30-30 50zM880 2180c20-40 60-20 60 20-10 30-50 20-60-20M240 1440l40-20 20 40M380 1380l60 40-30 30zM560 1350c20-40 60-20 50 20M130 1400c0-30 40-30 40 0"/>
          <use href="#star" x="280" y="1340"/><use href="#spiral" x="960" y="2060"/><use href="#spiral" x="480" y="2150"/><use href="#heart" x="620" y="1990"/><use href="#star" x="110" y="2010"/><use href="#fish" x="330" y="2180"/><use href="#dot" x="38" y="1410"/><use href="#dot" x="32" y="1700"/><use href="#dot" x="46" y="2240"/>
        </g>
      </g>
    </svg>

    <span class="edge-marker" aria-hidden="true"></span>

    <div class="messages">
      <article class="msg in">
        <div class="bubble tailed">
          <p>• 智能去重和结果统计</p>
          <p>• 最多可添加20个关键词</p>
          <p><br></p>
          <div class="last">
            <p><svg class="emoji" viewBox="0 0 24 22" role="img" aria-label="灯泡"><path fill="#fbe7a2" stroke="#e8c66a" stroke-width=".800" d="M12 .8c-4 0-6.500 2.800-6.500 6.200 0 3.500 3 5 3.600 8.500h5.800c.6-3.500 3.600-5 3.600-8.500C18.500 3.600 16 .8 12 .8z"/><ellipse cx="11" cy="6" rx="3.500" ry="4" fill="#fffbe6"/><path d="M10.500 15V9l1.500 1 1.500-1v6" fill="none" stroke="#efd58c" stroke-width=".800"/><path fill="#8e8e86" d="M9 16h6v3.500L13.500 21.500h-3L9 19.500z"/><path stroke="#5e5e5a" stroke-width=".700" d="M9 17.500h6M9 19.300h6"/></svg> 提示：现在就发送关键词吧！</p>
            <time>11:16</time>
          </div>
          <svg class="tail" viewBox="0 0 8 16" aria-hidden="true"><path d="M8 0v16H1c-1 0-1-1 0-1.500C5 12 7 8 7 0z"/></svg>
        </div>
      </article>

      <article class="msg out">
        <div class="bubble tailed">
          <div class="last">
            <p>比特币 区块链 测试</p>
            <time>11:16</time>
            <svg class="ticks" width="24" height="16" viewBox="0 0 24 16" role="img" aria-label="已读"><path d="M1.500 9l4.500 4.500L16 2.500M9.500 11.500L12 13.500 22.500 2.500"/></svg>
          </div>
          <svg class="tail" viewBox="0 0 8 16" aria-hidden="true"><path d="M0 0v16h7c1 0 1-1 0-1.500C3 12 1 8 1 0z"/></svg>
        </div>
      </article>

      <article class="msg in">
        <div class="bubble">
          <p><svg class="emoji" viewBox="0 0 24 22" role="img" aria-label="备忘"><path fill="#eceae4" stroke="#d5d2ca" stroke-width=".700" d="M2.500 1h18v20h-18z"/><path stroke="#9c9a94" stroke-width=".900" stroke-dasharray="3 .7 2 .6" d="M4.500 3.500h14M4.500 6h14M4.500 8.500h12M4.500 11h10M4.500 13.500h7M4.500 16h4M4.500 18.500h4"/><path fill="#f5b82e" stroke="#c98a1a" stroke-width=".600" d="M8.500 16.500L18 7.500l3.500 3.500-9.500 8.500z"/><path fill="#ec8079" d="M18 7.500l1.500-1.500c1.500-1 4 1.500 3.200 3l-1.400 1.700z"/><path fill="#f4dcb0" d="M8.500 16.500l-1.700 4.300 5.200-1.300z"/><path fill="#444" d="M7.300 19.600l-.5 1.200 1.400-.4z"/></svg> 关键词添加结果</p>
          <p><br></p>
          <p><svg class="emoji" viewBox="0 0 24 22" role="img" aria-label="完成"><rect x="1" y="0" width="22" height="22" rx="2.500" fill="#099b1c"/><rect x="2" y="1" width="20" height="20" rx="2" fill="#12b928"/><path d="M6 12l4.200 5L17.500 4.500" fill="none" stroke="#fff" stroke-width="2.600"/></svg> 成功添加 3 个关键词：</p>
          <p>• 比特币</p>
          <p>• 区块链</p>
          <p>• 测试</p>
          <p><br></p>
          <div class="last">
            <p><svg class="emoji" viewBox="0 0 24 22" role="img" aria-label="柱状图"><path fill="#e6eef6" d="M2.500 0h19v22h-19z"/><path stroke="#cfdbe7" stroke-width=".600" d="M2.500 5h19M2.500 10h19M2.500 15h19"/><path fill="#15b42c" d="M4 8h4v14H4z"/><path fill="#c21f25" d="M10 12h4v10h-4z"/><path fill="#1763c2" d="M16 3h4v19h-4z"/></svg> 当前总数：3/20</p>
            <time>11:16</time>
          </div>
        </div>
        <div class="keyboard one">
          <button class="key"><svg class="emoji" viewBox="0 0 24 22" aria-hidden="true"><g fill="none"><circle cx="12" cy="11" r="8.800" stroke="#8a8e92" stroke-width="3" stroke-dasharray="2.200 2.400"/><circle cx="12" cy="11" r="6.300" stroke="#a9adb1" stroke-width="3.400"/><circle cx="12" cy="11" r="8" stroke="#6f7479" stroke-width=".600"/><circle cx="12" cy="11" r="3.400" fill="#c3c6c9" stroke="#5f6469" stroke-width="1.200"/></g><circle cx="12" cy="11" r="1.300" fill="#666"/></svg>打开设置面板</button>
        </div>
      </article>

      <article class="msg in">
        <div class="bubble">
          <p><svg class="emoji" viewBox="0 0 24 22" role="img" aria-label="丝带"><path fill="#e09c09" d="M15 .8c-3-1.300-7.200-.3-7.500 3.200C7.200 8 13 14 16.500 20.800l2.800-2.600C16 11.500 11 7 11.200 4.500c.2-1.500 2.600-1.500 3.200-.5z"/><path fill="#fbc81e" d="M9.500.8c4-1.600 7.500-.3 7.500 3.400C17 9 11 14 8.800 21.500L5.500 18.500C7.500 12 13.500 7 13.500 4.300c0-2-2.500-2-3.500-.8z"/></svg>来源群: 测试</p>
          <p><br></p>
          <p><svg class="emoji" viewBox="0 0 24 22" role="img" aria-label="摄像机"><path fill="#6b6f73" d="M4 6.500h15.500V19c-3 1.500-9 1.200-12-.5L6 13H4z"/><path fill="#8f9498" d="M1 4.500l17-2v6.500L1 9.500z"/><path fill="#3e4246" d="M17 3l5.500-2v3.500L23 8l-5 1zM1 9h4v3H1z"/><path fill="#33373a" d="M9 10.500h7v6H9z"/><circle cx="12" cy="14" r="1.800" fill="#777b80"/><path fill="#a8acb0" d="M19 8.500h3v7l-3 2z"/></svg>监控词: 测试</p>
          <p><br></p>
          <p><svg class="emoji" viewBox="0 0 24 22" role="img" aria-label="男士"><path fill="#3a78c6" d="M4 22c.2-4 2.500-5.500 8-5.500s7.800 1.500 8 5.500z"/><path fill="#e9bf9d" d="M9.500 14h5v3.500c-1.500 1.500-3.500 1.500-5 0z"/><circle cx="5.800" cy="9.500" r="1.500" fill="#efc9a8"/><circle cx="18.200" cy="9.500" r="1.500" fill="#efc9a8"/><path fill="#fadcbe" d="M6 6.500c0-7 12-7 12 0 0 6-2 10.500-6 10.500S6 12.500 6 6.500z"/><path fill="#2d2723" d="M5.500 8.500C4.500 2 8 0 12.500.2 17.500.2 19.500 3 18.500 8.500L17.300 6c-3 0-6.500-.3-8-1.500L6.700 6z"/><path fill="none" stroke="#5c3a28" stroke-width=".900" d="M8.500 8.300h2M13.500 8.300h2M10.500 13.800c1 .5 2 .5 3 0"/></svg>客户: <a class="mention" href="#yyyy0809">@yyyy0809</a></p>
          <p><br></p>
          <div class="last">
            <p><svg class="emoji" viewBox="0 0 24 22" role="img" aria-label="书"><path fill="#4b83ad" d="M1.500 4.500h21v14.500h-9.500l-1 1-1-1h-9.500z"/><path fill="#e6e8ea" stroke="#9aa0a6" stroke-width=".600" d="M2.500 3c4-1 7-.5 9.500 1.200V18c-3-1.500-6-1.600-9.500-.8zM21.500 3c-4-1-7-.5-9.500 1.200V18c3-1.500 6-1.600 9.500-.8z"/><path fill="none" stroke="#a9aeb4" stroke-width=".800" d="M4 5.500h6.500M4 8h6.500M4 10.500h6.500M4 13h6.500M13.500 5.500H20M13.500 8H20M13.500 10.500H20M13.500 13H20"/></svg>原文消息:测试</p>
            <time>11:17</time>
          </div>
        </div>
        <div class="keyboard two">
          <button class="key"><svg class="emoji" viewBox="0 0 24 22" aria-hidden="true"><circle cx="12" cy="11" r="8.500" fill="none" stroke="#b7261a" stroke-width="3.500"/><circle cx="12" cy="11" r="8.500" fill="none" stroke="#e94131" stroke-width="2.600"/><path d="M6 5l12 12" stroke="#d93425" stroke-width="3"/></svg>屏蔽</button>
          <button class="key"><svg class="emoji" viewBox="0 0 24 22" aria-hidden="true"><path fill="#77877f" fill-opacity=".6" d="M3 2h18l-2.800 18.500c-2 1.500-10.400 1.500-12.400 0z"/><path fill="none" stroke="#515c5f" stroke-width=".700" d="M4 5l13 15M7 3l12 12M12 3l8 8M20 5L7 20M17 3L5.500 15M12 3L4 11"/><path fill="none" stroke="#5c6870" d="M3 2l2.800 18M21 2l-2.800 18"/><ellipse cx="12" cy="2.300" rx="10" ry="1.700" fill="#6e777c" stroke="#4e565b" stroke-width=".700"/><path fill="none" stroke="#59617d" stroke-width="1.600" d="M5.800 20c3 1.600 9.400 1.600 12.400 0"/></svg>删除</button>
          <button class="key"><svg class="emoji" viewBox="0 0 24 22" aria-hidden="true"><path fill="#c9c9c9" d="M12 1.200c6 0 10.500 3.400 10.500 8S18 18 12 18c-1 0-2-.1-3-.3-1.500 2-3 3-5.500 3 1-1 1.500-2.500 1.200-4.500C2.500 14.500 1.500 12 1.500 9.200c0-4.600 4.500-8 10.500-8z"/><path fill="#f0f0f0" d="M12 .5c6 0 10 3.300 10 7.800S18 16.500 12 16.500 2 13 2 8.300 6 .5 12 .5z"/><g fill="#474747"><circle cx="8" cy="9" r="1.100"/><circle cx="12" cy="9" r="1.100"/><circle cx="16" cy="9" r="1.100"/></g></svg>直接聊天<svg class="ext" viewBox="0 0 10 10" aria-hidden="true"><path d="M1.500 8.500L8.500 1.500M2.500 1.200h6.300v6.300"/></svg></button>
          <button class="key"><svg class="emoji" viewBox="0 0 24 22" aria-hidden="true"><rect x="3" y="1.500" width="18" height="20.500" rx="1" fill="#b87142"/><path fill="#e9e6e3" d="M5 4h14v15.500H5z"/><path stroke="#cbc8c4" stroke-width=".900" d="M7 8h10M7 10.500h10M7 13h10M7 15.500h10"/><path fill="#999da0" d="M7.500 2.500l3-.5c0-2.500 3-2.500 3 0l3 .5v3h-9z"/></svg>查看历史</button>
        </div>
      </article>
    </div>
  </main>

  <form class="composer">
    <button type="button" class="icon-btn attach" aria-label="附件"><svg width="28" height="28" viewBox="0 0 28 28"><path d="M4 12l7.500-7.200c3.300-3 8.300-3.300 11.500 0 3.200 3.200 3 8.200 0 11.300l-8.200 8c-2.300 2.200-5.800 2.600-8.200.3-2.300-2.300-2.200-6 .2-8.200l8-7.800c1.500-1.500 3.600-1.500 5 0 1.300 1.400 1.200 3.400-.2 4.800L12 20.500"/></svg></button>
    <input class="entry" type="text" placeholder="输入消息..." aria-label="输入消息">
    <button type="button" class="icon-btn tool" aria-label="命令"><svg width="28" height="28" viewBox="0 0 28 28"><rect x="1.500" y="1.500" width="25" height="25" rx="5"/><g class="solid"><circle cx="10" cy="10.500" r="2"/><circle cx="17.800" cy="10.500" r="2"/><circle cx="10" cy="18" r="2"/><circle cx="17.800" cy="18" r="2"/></g></svg></button>
    <button type="button" class="icon-btn tool" aria-label="表情"><svg width="28" height="28" viewBox="0 0 28 28"><circle cx="14" cy="14" r="13"/><path d="M9 17.500c2.500 3.700 7.500 3.700 10 0"/><g class="solid"><circle cx="9.500" cy="12" r="1.900"/><circle cx="18.300" cy="12" r="1.900"/></g></svg></button>
    <button type="button" class="icon-btn tool" aria-label="语音"><svg width="28" height="28" viewBox="0 0 28 28"><rect x="8.500" y="1" width="11" height="18.500" rx="5.500"/><path d="M4 14c0 13.500 20 13.500 20 0M14 24v4"/></svg></button>
  </form>
</div>
</body>
</html>
```

FILE: styles.css
```css
* {
  box-sizing: border-box;
}

body {
  margin: 0;
  font: 16px/22px "Open Sans", "Noto Sans CJK SC", sans-serif;
  color: #000;
  background: #fff;
}

h1,
p {
  margin: 0;
}

button {
  padding: 0;
  border: 0;
  background: none;
  font: inherit;
  color: inherit;
}

.app {
  display: flex;
  flex-direction: column;
  height: 100vh;
  overflow: hidden;
}

.titlebar {
  display: flex;
  justify-content: flex-end;
  flex: none;
  height: 25px;
  background: #f0f0f0;
}

.win-btn {
  display: flex;
  justify-content: center;
  width: 45px;
  padding-top: 2px;
}

.win-btn svg {
  fill: none;
  stroke: #a6a6a6;
  stroke-width: 1.4;
}

.header {
  display: flex;
  align-items: center;
  flex: none;
  height: 68px;
  padding-right: 11px;
  border-left: 1px solid #dfdfdf;
  border-bottom: 1px solid #dfdfdf;
}

.icon-btn {
  display: flex;
  align-items: center;
  justify-content: center;
  flex: none;
  width: 50px;
  height: 44px;
}

.icon-btn svg {
  fill: none;
  stroke: #999;
  stroke-width: 1.8;
}

.icon-btn .solid {
  fill: #999;
  stroke: none;
}

.back {
  width: 65px;
}

.more {
  width: 38px;
}

.peer {
  flex: 1;
  min-width: 0;
}

.peer-name {
  font-size: 17px;
  line-height: 24px;
  font-weight: 700;
  color: #222;
}

.peer-status {
  line-height: 24px;
  color: #999;
}

.chat {
  position: relative;
  flex: 1;
  min-height: 0;
  overflow: hidden;
  background:
    radial-gradient(ellipse 58% 46% at 44% 4%, #7bae92 0%, rgba(123, 174, 146, 0.75) 45%, rgba(123, 174, 146, 0) 100%),
    radial-gradient(ellipse 60% 62% at 100% 34%, #cbd38a 0%, rgba(203, 211, 138, 0.8) 45%, rgba(203, 211, 138, 0) 100%),
    radial-gradient(ellipse 62% 44% at 66% 100%, #92be88 0%, rgba(146, 190, 136, 0.8) 45%, rgba(146, 190, 136, 0) 100%),
    radial-gradient(ellipse 55% 60% at 0% 78%, #d3dab8 0%, rgba(211, 218, 184, 0.7) 45%, rgba(211, 218, 184, 0) 100%),
    linear-gradient(#93ba98, #a9c795 50%, #a3c38a);
}

.wallpaper {
  position: absolute;
  inset: 0;
  width: 100%;
  height: 100%;
}

.edge-marker {
  position: absolute;
  top: 0;
  left: 0;
  width: 1px;
  height: 76px;
  background: #2f9be6;
}

.doodles {
  fill: none;
  stroke: #5a8a3c;
  stroke-opacity: 0.27;
  stroke-width: 2.6;
  stroke-linejoin: round;
  stroke-linecap: round;
}

.pip {
  fill: #5a8a3c;
  fill-opacity: 0.3;
}

.messages {
  position: relative;
  display: flex;
  flex-direction: column;
  justify-content: flex-end;
  gap: 9px;
  height: 100%;
  padding: 0 20px 12px 21px;
}

.msg {
  display: flex;
  flex-direction: column;
  flex: none;
  gap: 2px;
  width: fit-content;
  max-width: 90%;
}

.out {
  align-self: flex-end;
}

.bubble {
  position: relative;
  padding: 10px 12px 10px 14px;
  border-radius: 21px 21px 6px 6px;
  background: #fff;
}

.in .tailed {
  border-radius: 21px 21px 21px 0;
}

.out .bubble {
  padding-right: 9px;
  border-radius: 21px 21px 0 21px;
  background: #effddf;
}

.emoji {
  width: 24px;
  height: 22px;
  vertical-align: top;
}

.last {
  display: flex;
  align-items: flex-end;
  justify-content: space-between;
  gap: 16px;
}

.last time {
  margin-bottom: -5px;
  font-size: 15px;
  color: #a0acb6;
}

.out time {
  color: #6cc264;
}

.ticks {
  margin: 0 0 -3px -6px;
  fill: none;
  stroke: #5dc452;
  stroke-width: 2;
}

.tail {
  position: absolute;
  bottom: 0;
  width: 8px;
  height: 16px;
}

.in .tail {
  left: -7px;
  fill: #fff;
}

.out .tail {
  right: -7px;
  fill: #effddf;
}

.mention {
  color: #168acd;
  text-decoration: none;
}

.keyboard {
  display: grid;
  gap: 2px;
}

.two {
  grid-template-columns: repeat(2, minmax(156px, 1fr));
}

.key {
  position: relative;
  display: flex;
  align-items: center;
  justify-content: center;
  gap: 4px;
  height: 45px;
  padding-bottom: 2px;
  border-radius: 6px;
  background: rgba(65, 105, 50, 0.4);
  color: #fff;
  font-size: 17px;
  font-weight: 700;
}

.one .key {
  border-radius: 6px 6px 22px 22px;
}

.two .key:nth-child(3) {
  border-bottom-left-radius: 22px;
}

.two .key:nth-child(4) {
  border-bottom-right-radius: 22px;
}

.ext {
  position: absolute;
  top: 6px;
  right: 6px;
  width: 10px;
  height: 10px;
  fill: none;
  stroke: #fff;
  stroke-width: 1.6;
}

.composer {
  display: flex;
  align-items: center;
  flex: none;
  height: 54px;
  padding-right: 3px;
  border-left: 1px solid #dfdfdf;
}

.attach {
  width: 58px;
}

.tool {
  width: 55px;
}

.entry {
  flex: 1;
  min-width: 0;
  padding: 0 6px;
  border: 0;
  outline: 0;
  background: none;
  font: inherit;
}

.entry::placeholder {
  color: #999;
  opacity: 1;
}
```
